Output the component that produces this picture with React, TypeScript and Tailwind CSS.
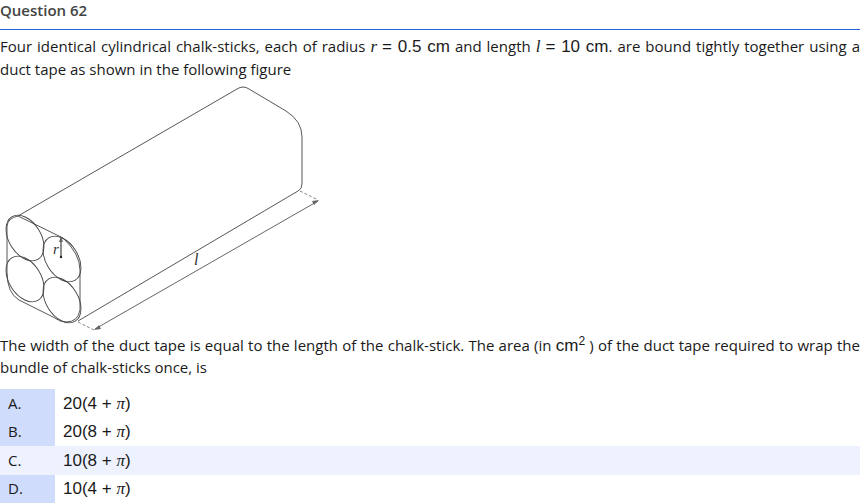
import React from 'react';

const options = [
  { label: 'A.', value: '20(4 + ', active: false },
  { label: 'B.', value: '20(8 + ', active: false },
  { label: 'C.', value: '10(8 + ', active: true },
  { label: 'D.', value: '10(4 + ', active: false },
];

const MathVar: React.FC<{ children: React.ReactNode }> = ({ children }) => (
  <span className="font-['Liberation_Serif',serif] italic text-[17px] leading-none">{children}</span>
);

const Sans: React.FC<{ children: React.ReactNode }> = ({ children }) => (
  <span className="font-['Liberation_Sans',sans-serif] text-[17px] leading-none">{children}</span>
);

const Figure: React.FC = () => (
  <svg width="330" height="252" viewBox="0 80 330 252" className="block" fill="none" stroke="#444" strokeWidth="0.9">
    <path d="M18 214 L237 87 Q243 83 249 87 L286 109 Q302 119 302 135 L302 182 Q302 187 298 189 L78 319" />
    <path d="M18 214 L63 236 Q80 252 80 268 L80 308 Q78 320 66 320 Q60 320 53 315 L19 298 Q7 291 7 270 L7 224 Q8 216 18 214 Z" />
    <ellipse cx="25" cy="236" rx="25" ry="16" transform="rotate(58 25 236)" />
    <ellipse cx="62" cy="257" rx="25" ry="16" transform="rotate(58 62 257)" />
    <ellipse cx="25" cy="277" rx="25" ry="16" transform="rotate(58 25 277)" />
    <ellipse cx="62" cy="298" rx="25" ry="16" transform="rotate(58 62 298)" />
    <path d="M61 236 L61 254" strokeWidth="1.2" />
    <path d="M61 234 L59 240 L63 240 Z" fill="#666" stroke="none" />
    <circle cx="61" cy="255" r="1.2" fill="#222" stroke="none" />
    <path d="M300 189 L318 198 M78 320 L94 328" stroke="#777" strokeDasharray="3 2" />
    <path d="M318 199 L95 327" stroke="#555" />
    <path d="M319 198 L312 199 L314 203 Z M94 328 L101 327 L99 323 Z" fill="#666" stroke="none" />
    <text x="53" y="252" fontFamily="'Liberation Serif', serif" fontStyle="italic" fontSize="15" fill="#333" stroke="none">r</text>
    <text x="194" y="263" fontFamily="'Liberation Serif', serif" fontStyle="italic" fontSize="16" fill="#333" stroke="none">l</text>
  </svg>
);

export default function App() {
  return (
    <div className="w-[860px] h-[503px] overflow-hidden bg-white font-['Open_Sans',sans-serif] text-[15px] leading-[23px] text-[#1a1a1a]">
      <div className="h-[30px] border-b border-[#2a6ad8]">
        <h2 className="font-semibold text-[#444] leading-[21px]">Question 62</h2>
      </div>
      <p className="pt-[5px] text-justify">
        Four identical cylindrical chalk-sticks, each of radius <MathVar>r</MathVar> <Sans>= 0.5 cm</Sans> and length{' '}
        <MathVar>l</MathVar> <Sans>= 10 cm</Sans>. are bound tightly together using a duct tape as shown in the following figure
      </p>
      <div className="pt-[1px]">
        <Figure />
      </div>
      <p className="text-justify leading-[22px]">
        The width of the duct tape is equal to the length of the chalk-stick. The area (in{' '}
        <Sans>
          cm<sup className="text-[12px] align-baseline relative top-[-6px]">2</sup>
        </Sans>{' '}
        ) of the duct tape required to wrap the bundle of chalk-sticks once, is
      </p>
      <div className="mt-[11px]">
        {options.map((o) => (
          <div key={o.label} className={`flex h-[28.5px] items-center ${o.active ? 'bg-[#edf2fe]' : ''}`}>
            <div className={`w-[55px] h-full flex items-center pl-[8px] ${o.active ? '' : 'bg-[#cfdcfb]'}`}>{o.label}</div>
            <div className="pl-[8px]">
              <Sans>{o.value}</Sans>
              <MathVar>π</MathVar>
              <Sans>)</Sans>
            </div>
          </div>
        ))}
      </div>
    </div>
  );
}
